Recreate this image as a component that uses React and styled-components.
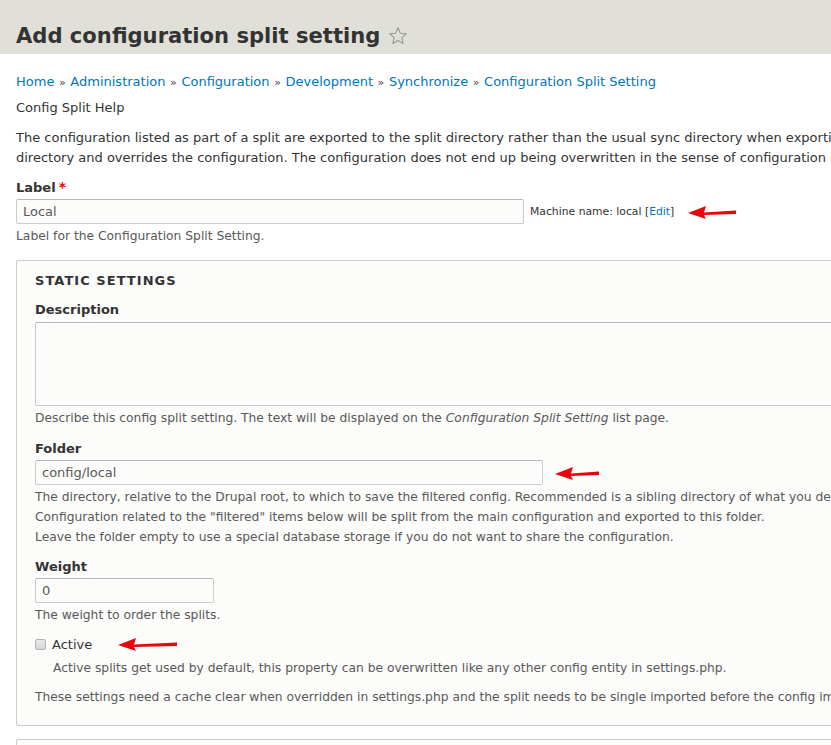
import React from 'react';
import styled, { createGlobalStyle } from 'styled-components';

const GlobalStyle = createGlobalStyle`
    html, body {
        margin: 0;
        padding: 0;
        background: #ffffff;
        overflow: hidden;
    }
    body {
        font-family: "DejaVu Sans", Verdana, sans-serif;
        font-size: 13px;
        line-height: 20px;
        color: #333333;
    }
`;

const Page = styled.div`
    width: 1260px;
`;

const Header = styled.header`
    background: #e0e0d8;
    height: 54px;
    padding: 0 16px;
    display: flex;
    align-items: flex-end;
    box-sizing: border-box;
`;

const Title = styled.h1`
    margin: 0 0 5px 0;
    font-size: 21.1px;
    line-height: 26px;
    font-weight: bold;
    color: #333333;
    display: flex;
    align-items: center;
    gap: 8px;
`;

const Main = styled.main`
    padding: 17px 16px 0 16px;
`;

const Link = styled.a`
    color: #0074bd;
    text-decoration: none;
`;

const Crumbs = styled.nav`
    line-height: 20px;
    margin-top: 1px;
    color: #333;
`;

const Sep = styled.span`
    margin: 0 4.6px;
    font-size: 11px;
    color: #444;
`;

const Text = styled.p`
    margin: ${props => props.margin || '0'};
    line-height: 20px;
`;

const FieldLabel = styled.label`
    display: block;
    font-weight: bold;
    line-height: 20px;
    margin: ${props => props.margin || '0 0 1px 0'};
`;

const Required = styled.span`
    color: #e00;
    margin-left: 3px;
    font-size: 14px;
`;

const InputRow = styled.div`
    display: flex;
    align-items: center;
`;

const Input = styled.input`
    box-sizing: border-box;
    width: ${props => props.w || '508px'};
    height: 25px;
    padding: 0 6px;
    font-family: "DejaVu Sans", Verdana, sans-serif;
    font-size: 13px;
    color: #595959;
    background: #fcfcfa;
    border: 1px solid #cccccc;
    border-top-color: #b8b8b8;
    border-radius: 2px;
    outline: none;
`;

const MachineName = styled.span`
    font-size: 10.8px;
    color: #333;
    margin-left: 6px;
`;

const Description = styled.div`
    font-size: 12.3px;
    line-height: 20px;
    color: #595959;
    margin: ${props => props.margin || '2px 0 0 0'};
    padding-left: ${props => props.indent || '0'};
    white-space: nowrap;
`;

const Fieldset = styled.fieldset`
    margin: ${props => props.margin || '14px 0 0 0'};
    padding: 10px 18px 18px 18px;
    border: 1px solid #cccccc;
    border-radius: 2px;
    background: #fcfcfa;
    min-width: 0;
`;

const Legend = styled.div`
    font-weight: bold;
    text-transform: uppercase;
    letter-spacing: 0.08em;
    line-height: 20px;
    margin-bottom: 9px;
`;

const TextArea = styled.textarea`
    display: block;
    box-sizing: border-box;
    width: 100%;
    height: 84px;
    margin-top: 2px;
    background: #fcfcfa;
    border: 1px solid #cccccc;
    border-top-color: #b8b8b8;
    border-radius: 2px;
    resize: none;
`;

const Item = styled.div`
    margin-top: ${props => props.top || '11px'};
`;

const CheckRow = styled.div`
    display: flex;
    align-items: center;
    margin-top: 10px;
`;

const Box = styled.span`
    width: 11px;
    height: 11px;
    box-sizing: border-box;
    border: 1px solid #b3b3b3;
    border-radius: 2px;
    background: linear-gradient(#e8e8e8, #d6d6d6);
    margin: -1px 6px 0 0;
`;

const Arrow = ({ width = 48, margin }) => (
    <svg width={width} height="16" viewBox={`0 0 ${width} 16`} style={{ margin }}>
        <polygon points={`0,9 18,2 16,8.5 ${width},6.5 ${width},10 16,11 18,15`} fill="#e8050b" />
    </svg>
);

const Star = () => (
    <svg width="20" height="20" viewBox="0 0 24 24" fill="none" stroke="#999" strokeWidth="1.3" strokeLinejoin="round">
        <polygon points="12,2 14.9,8.6 22,9.3 16.6,14 18.2,21 12,17.3 5.8,21 7.4,14 2,9.3 9.1,8.6" />
    </svg>
);

const App = () => {
    return <Page>
        <GlobalStyle />
        <Header>
            <Title>Add configuration split setting <Star /></Title>
        </Header>
        <Main>
            <Crumbs>
                <Link href="#">Home</Link><Sep>»</Sep>
                <Link href="#">Administration</Link><Sep>»</Sep>
                <Link href="#">Configuration</Link><Sep>»</Sep>
                <Link href="#">Development</Link><Sep>»</Sep>
                <Link href="#">Synchronize</Link><Sep>»</Sep>
                <Link href="#">Configuration Split Setting</Link>
            </Crumbs>
            <Text margin="5px 0 0 0">Config Split Help</Text>
            <Text margin="10px 0 0 0">
                The configuration listed as part of a split are exported to the split directory rather than the usual sync directory when exporting configuration and is merged from the split<br />
                directory and overrides the configuration. The configuration does not end up being overwritten in the sense of configuration overrides.
            </Text>

            <Item top="9px">
                <FieldLabel>Label<Required>*</Required></FieldLabel>
                <InputRow>
                    <Input defaultValue="Local" />
                    <MachineName>Machine name: local [<Link href="#">Edit</Link>]</MachineName>
                    <Arrow width={48} margin="0 0 0 14px" />
                </InputRow>
                <Description>Label for the Configuration Split Setting.</Description>
            </Item>

            <Fieldset>
                <Legend>Static settings</Legend>
                <FieldLabel margin="0">Description</FieldLabel>
                <TextArea />
                <Description>Describe this config split setting. The text will be displayed on the <em>Configuration Split Setting</em> list page.</Description>

                <Item>
                    <FieldLabel>Folder</FieldLabel>
                    <InputRow>
                        <Input defaultValue="config/local" />
                        <Arrow width={44} margin="0 0 0 12px" />
                    </InputRow>
                    <Description>
                        The directory, relative to the Drupal root, to which to save the filtered config. Recommended is a sibling directory of what you defined as the sync directory.<br />
                        Configuration related to the "filtered" items below will be split from the main configuration and exported to this folder.<br />
                        Leave the folder empty to use a special database storage if you do not want to share the configuration.
                    </Description>
                </Item>

                <Item top="10px">
                    <FieldLabel>Weight</FieldLabel>
                    <Input w="179px" defaultValue="0" />
                    <Description>The weight to order the splits.</Description>
                </Item>

                <CheckRow>
                    <Box />
                    <span>Active</span>
                    <Arrow width={59} margin="-3px 0 0 26px" />
                </CheckRow>
                <Description indent="18px" margin="3px 0 0 0">Active splits get used by default, this property can be overwritten like any other config entity in settings.php.</Description>
                <Description margin="9px 0 0 0">These settings need a cache clear when overridden in settings.php and the split needs to be single imported before the config import.</Description>
            </Fieldset>

            <Fieldset margin="13px 0 0 0">
                <Legend>Complete split</Legend>
            </Fieldset>
        </Main>
    </Page>;
};

export default App;
